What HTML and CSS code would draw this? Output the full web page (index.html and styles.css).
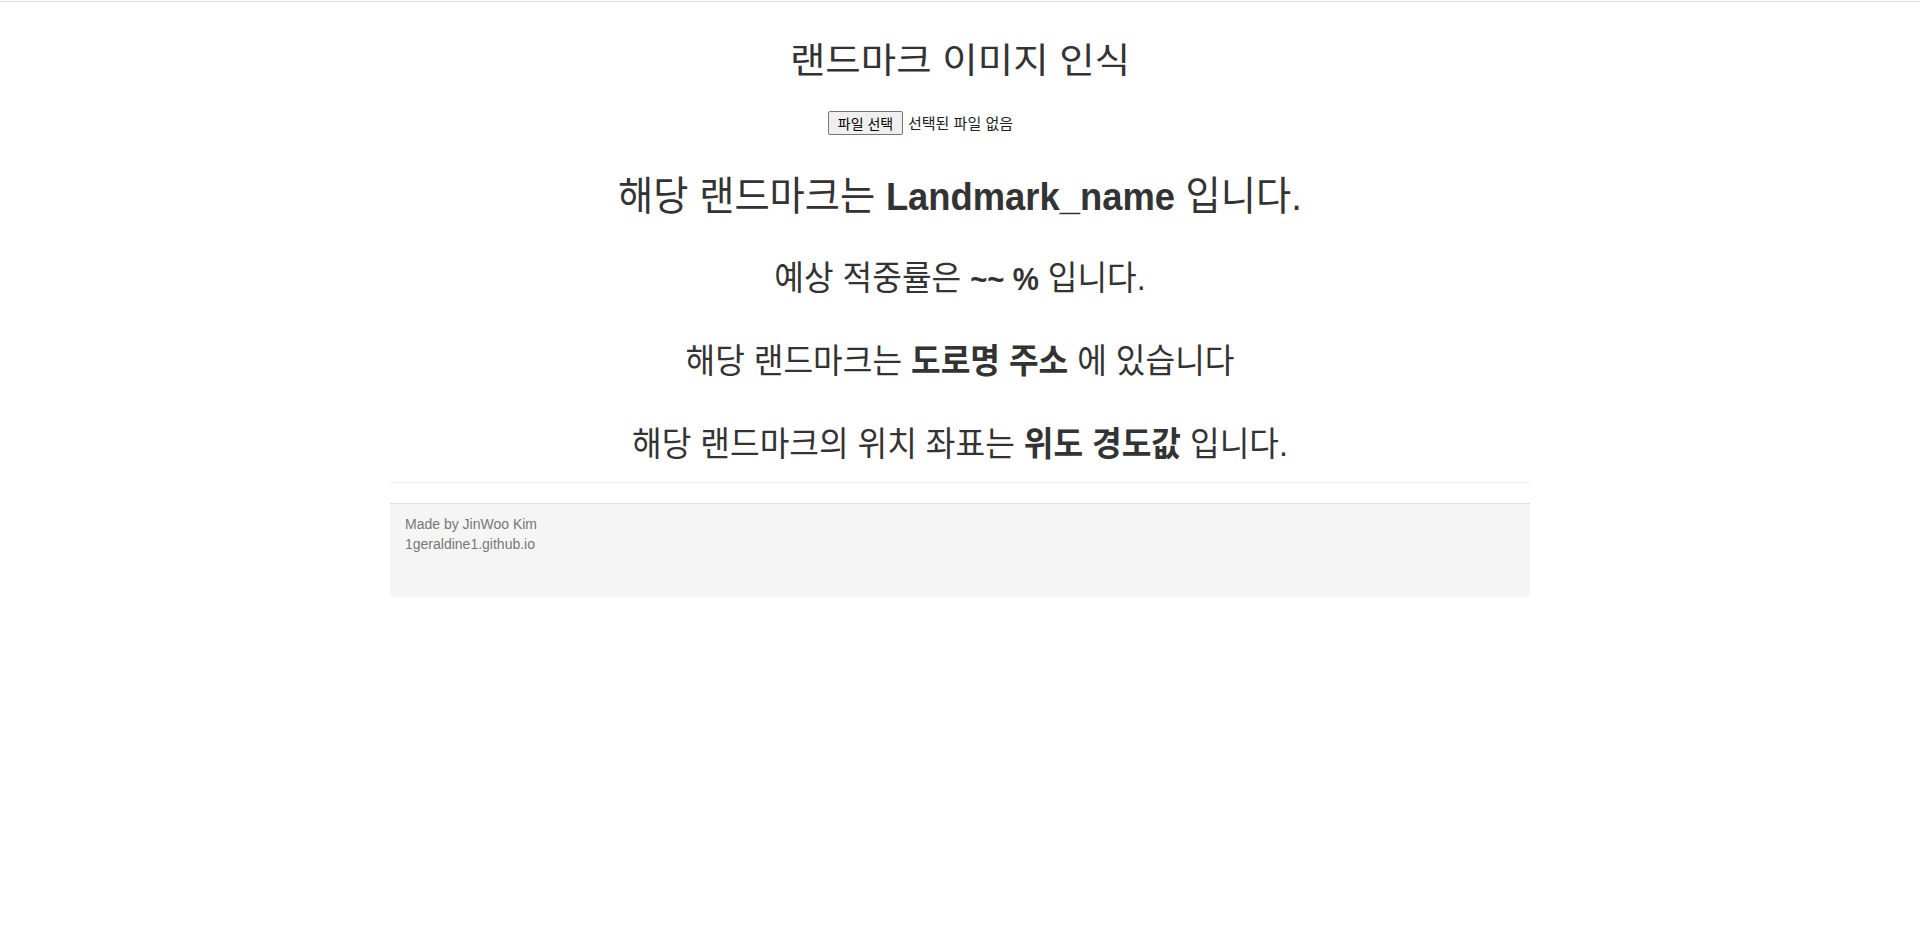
FILE: index.html
```html
<!DOCTYPE html>
<html lang="ko">
<head>
<meta charset="utf-8">
<title>랜드마크 이미지 인식</title>
<link rel="stylesheet" href="styles.css">
</head>
<body>
<div class="topline"></div>
<div class="container">
  <h1 class="title">랜드마크 이미지 인식</h1>
  <div class="file-row">
    <div class="file-input">
      <button class="file-btn" type="button">파일 선택</button><span class="file-label">선택된 파일 없음</span>
    </div>
  </div>
  <h1 class="result big">해당 랜드마크는 <b class="latin">Landmark_name</b> 입니다.</h1>
  <h2 class="result first">예상 적중률은 <b class="latin">~~ %</b> 입니다.</h2>
  <h2 class="result">해당 랜드마크는 <b>도로명 주소</b> 에 있습니다</h2>
  <h2 class="result">해당 랜드마크의 위치 좌표는 <b>위도 경도값</b> 입니다.</h2>
  <hr class="divider">
  <footer class="footer">
    <div>Made by JinWoo Kim</div>
    <div>1geraldine1.github.io</div>
  </footer>
</div>
</body>
</html>
```

FILE: styles.css
```css
html, body {
  margin: 0;
  padding: 0;
  background: #ffffff;
}
body {
  font-family: "Liberation Sans", "Noto Sans CJK KR", sans-serif;
  font-size: 14px;
  line-height: 20px;
  color: #333333;
}
.topline {
  height: 1px;
  border-bottom: 1px solid #dedede;
}
.container {
  width: 1140px;
  margin: 0 auto;
}
.title {
  margin: 37px 0 0;
  font-size: 35px;
  line-height: 44px;
  font-weight: 400;
  text-align: center;
  color: #333333;
  transform: scaleX(1.1);
}
.file-row {
  margin-top: 28px;
  display: flex;
  justify-content: center;
}
.file-input {
  width: 264px;
  height: 24px;
  display: flex;
  align-items: center;
  gap: 5px;
}
.file-btn {
  width: 75px;
  height: 24px;
  padding: 0;
  margin: 0;
  border: 1px solid #767676;
  border-radius: 2px;
  background: #efefef;
  font-family: "Noto Sans CJK KR", sans-serif;
  font-size: 14px;
  line-height: 20px;
  color: #000000;
}
.file-label {
  font-family: "Noto Sans CJK KR", sans-serif;
  font-size: 15px;
  line-height: 20px;
  color: #222222;
}
.result {
  margin: 40px 0 0;
  text-align: center;
  font-weight: 400;
  color: #333333;
  transform: scaleX(0.948);
  transform-origin: 50% 50%;
}
.result b {
  font-weight: 700;
}
.result .latin {
  line-height: 1;
}
.result.big {
  margin-top: 36px;
  font-size: 40px;
  line-height: 50px;
  transform: scaleX(0.957);
}
.result.big .latin {
  font-size: 38px;
}
h2.result {
  font-size: 34px;
  line-height: 43px;
}
h2.result .latin {
  font-size: 31px;
}
h2.result.first {
  margin-top: 36px;
}
.divider {
  margin: 16px 0 0;
  border: 0;
  border-top: 1px solid #eeeeee;
  height: 0;
}
.footer {
  margin-top: 20px;
  padding: 10px 15px 43px;
  background: #f5f5f5;
  border-top: 1px solid #dddddd;
  border-radius: 0 0 3px 3px;
  color: #777777;
  font-size: 14px;
  line-height: 20px;
}
```
